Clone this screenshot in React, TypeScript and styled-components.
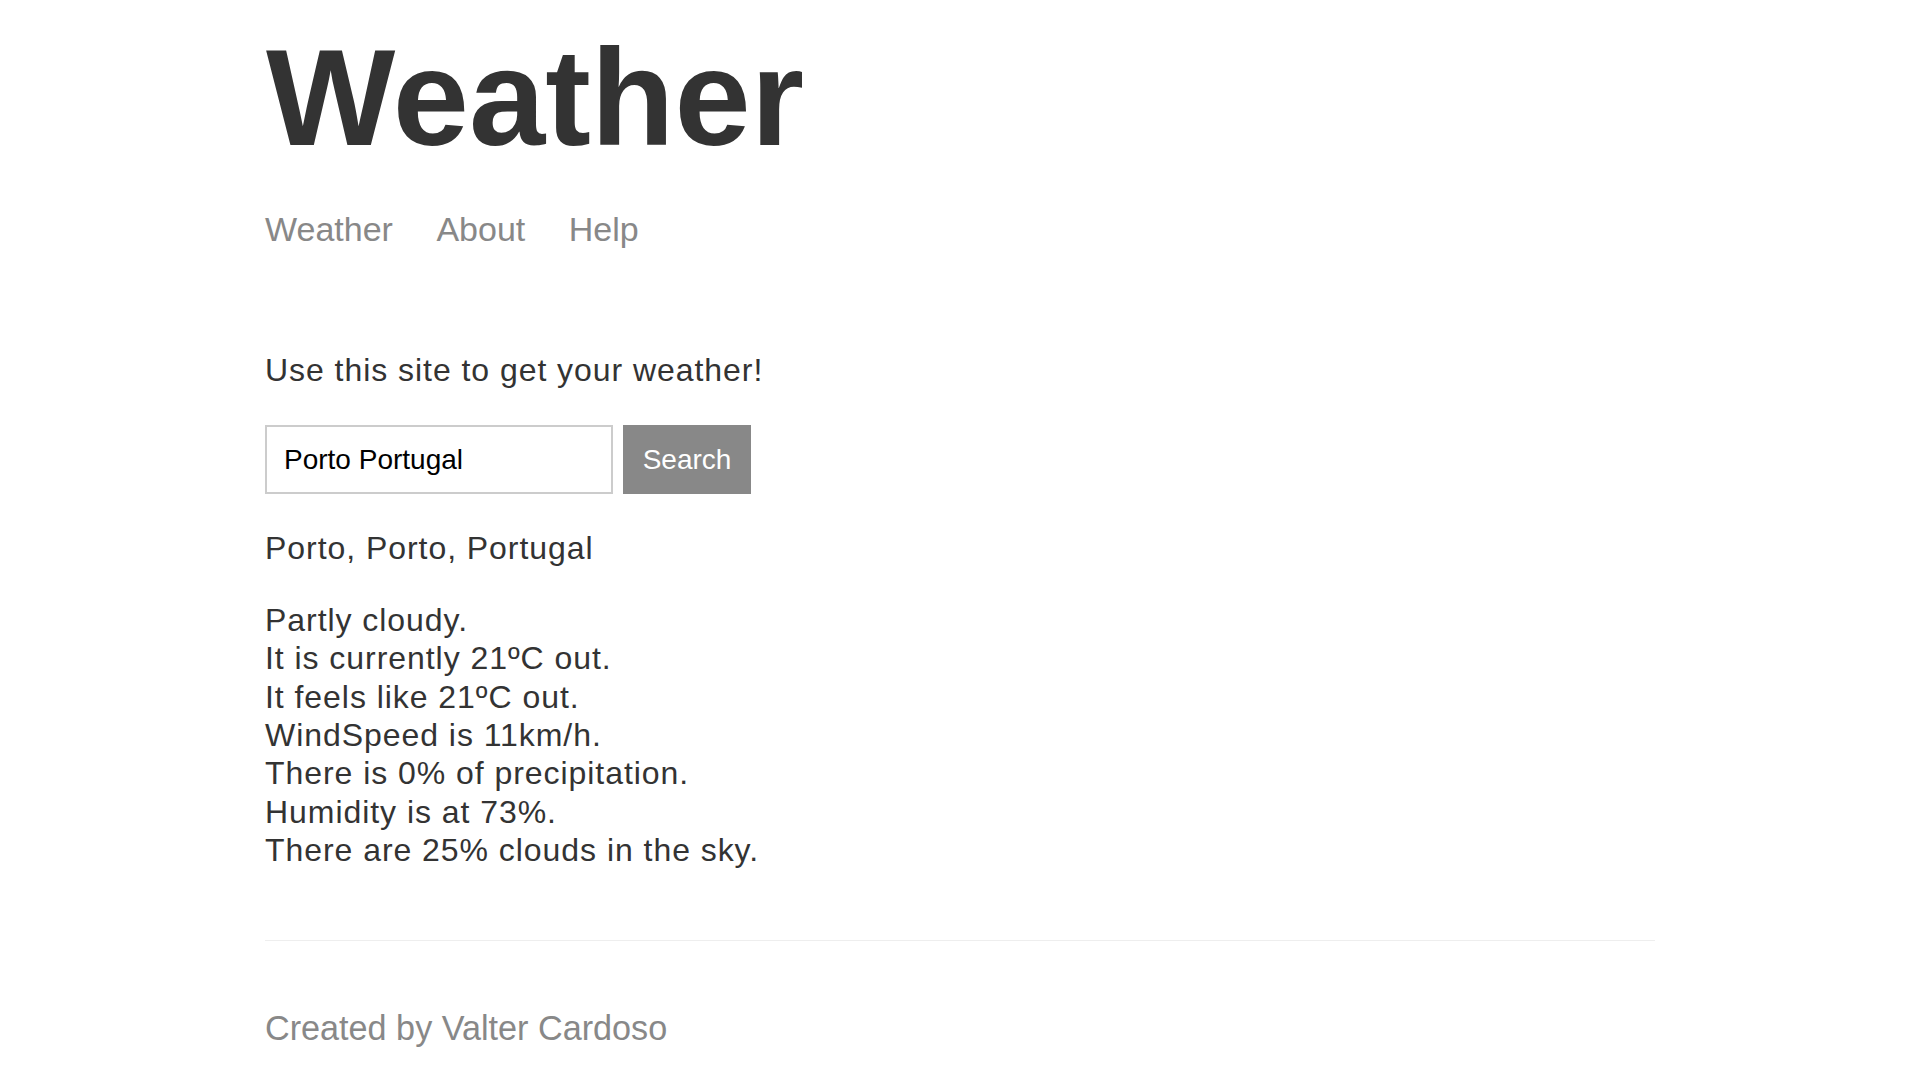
import React from "react";
import styled, { createGlobalStyle } from "styled-components";

const GlobalStyle = createGlobalStyle`
  html, body {
    margin: 0;
    padding: 0;
    background: #ffffff;
  }
  body {
    font-family: "Liberation Sans", Arial, Helvetica, sans-serif;
    color: #333333;
  }
`;

const Page = styled.div`
  max-width: 1390px;
  margin: 0 auto;
  padding: 30px 0 0;
  display: flex;
  flex-direction: column;
  box-sizing: border-box;
`;

const Header = styled.header`
  display: flex;
  flex-direction: column;
`;

const Title = styled.h1`
  margin: 0 0 0 1px;
  font-size: 137px;
  line-height: 136px;
  font-weight: 700;
  color: #333333;
`;

const Nav = styled.nav`
  display: flex;
  gap: 43.5px;
  margin-top: 43px;
`;

const NavLink = styled.a`
  font-size: 34px;
  line-height: 40px;
  color: #888888;
  text-decoration: none;
  cursor: pointer;
`;

const Main = styled.main`
  display: flex;
  flex-direction: column;
  align-items: flex-start;
`;

const Text = styled.p<{ $top: number }>`
  margin: ${(p) => p.$top}px 0 0;
  font-size: 32px;
  line-height: 38.4px;
  letter-spacing: 0.95px;
  color: #333333;
`;

const Form = styled.form`
  display: flex;
  gap: 10px;
  margin-top: 36px;
  height: 69px;
`;

const Input = styled.input`
  width: 348px;
  height: 69px;
  box-sizing: border-box;
  border: 2px solid #cccccc;
  padding: 0 17px;
  font-family: "Liberation Sans", Arial, Helvetica, sans-serif;
  font-size: 28px;
  color: #000000;
  background: #ffffff;
  outline: none;
`;

const Button = styled.button`
  width: 128px;
  height: 69px;
  border: none;
  background: #888888;
  color: #ffffff;
  font-family: "Liberation Sans", Arial, Helvetica, sans-serif;
  font-size: 28px;
  padding: 0;
  cursor: pointer;
`;

const Footer = styled.footer`
  border-top: 1px solid #eeeeee;
  margin-top: 70px;
  padding-top: 67px;
  padding-bottom: 20px;
`;

const FooterText = styled.p`
  margin: 0;
  font-size: 34.2px;
  line-height: 40px;
  color: #888888;
`;

const lines = [
  "Partly cloudy.",
  "It is currently 21ºC out.",
  "It feels like 21ºC out.",
  "WindSpeed is 11km/h.",
  "There is 0% of precipitation.",
  "Humidity is at 73%.",
  "There are 25% clouds in the sky.",
];

export default function App() {
  return (
    <>
      <GlobalStyle />
      <Page>
        <Header>
          <Title>Weather</Title>
          <Nav>
            <NavLink>Weather</NavLink>
            <NavLink>About</NavLink>
            <NavLink>Help</NavLink>
          </Nav>
        </Header>
        <Main>
          <Text $top={102}>Use this site to get your weather!</Text>
          <Form onSubmit={(e) => e.preventDefault()}>
            <Input defaultValue="Porto Portugal" placeholder="Location" />
            <Button type="submit">Search</Button>
          </Form>
          <Text $top={35}>Porto, Porto, Portugal</Text>
          <Text $top={33}>
            {lines.map((l, i) => (
              <React.Fragment key={i}>
                {l}
                {i < lines.length - 1 && <br />}
              </React.Fragment>
            ))}
          </Text>
        </Main>
        <Footer>
          <FooterText>Created by Valter Cardoso</FooterText>
        </Footer>
      </Page>
    </>
  );
}
